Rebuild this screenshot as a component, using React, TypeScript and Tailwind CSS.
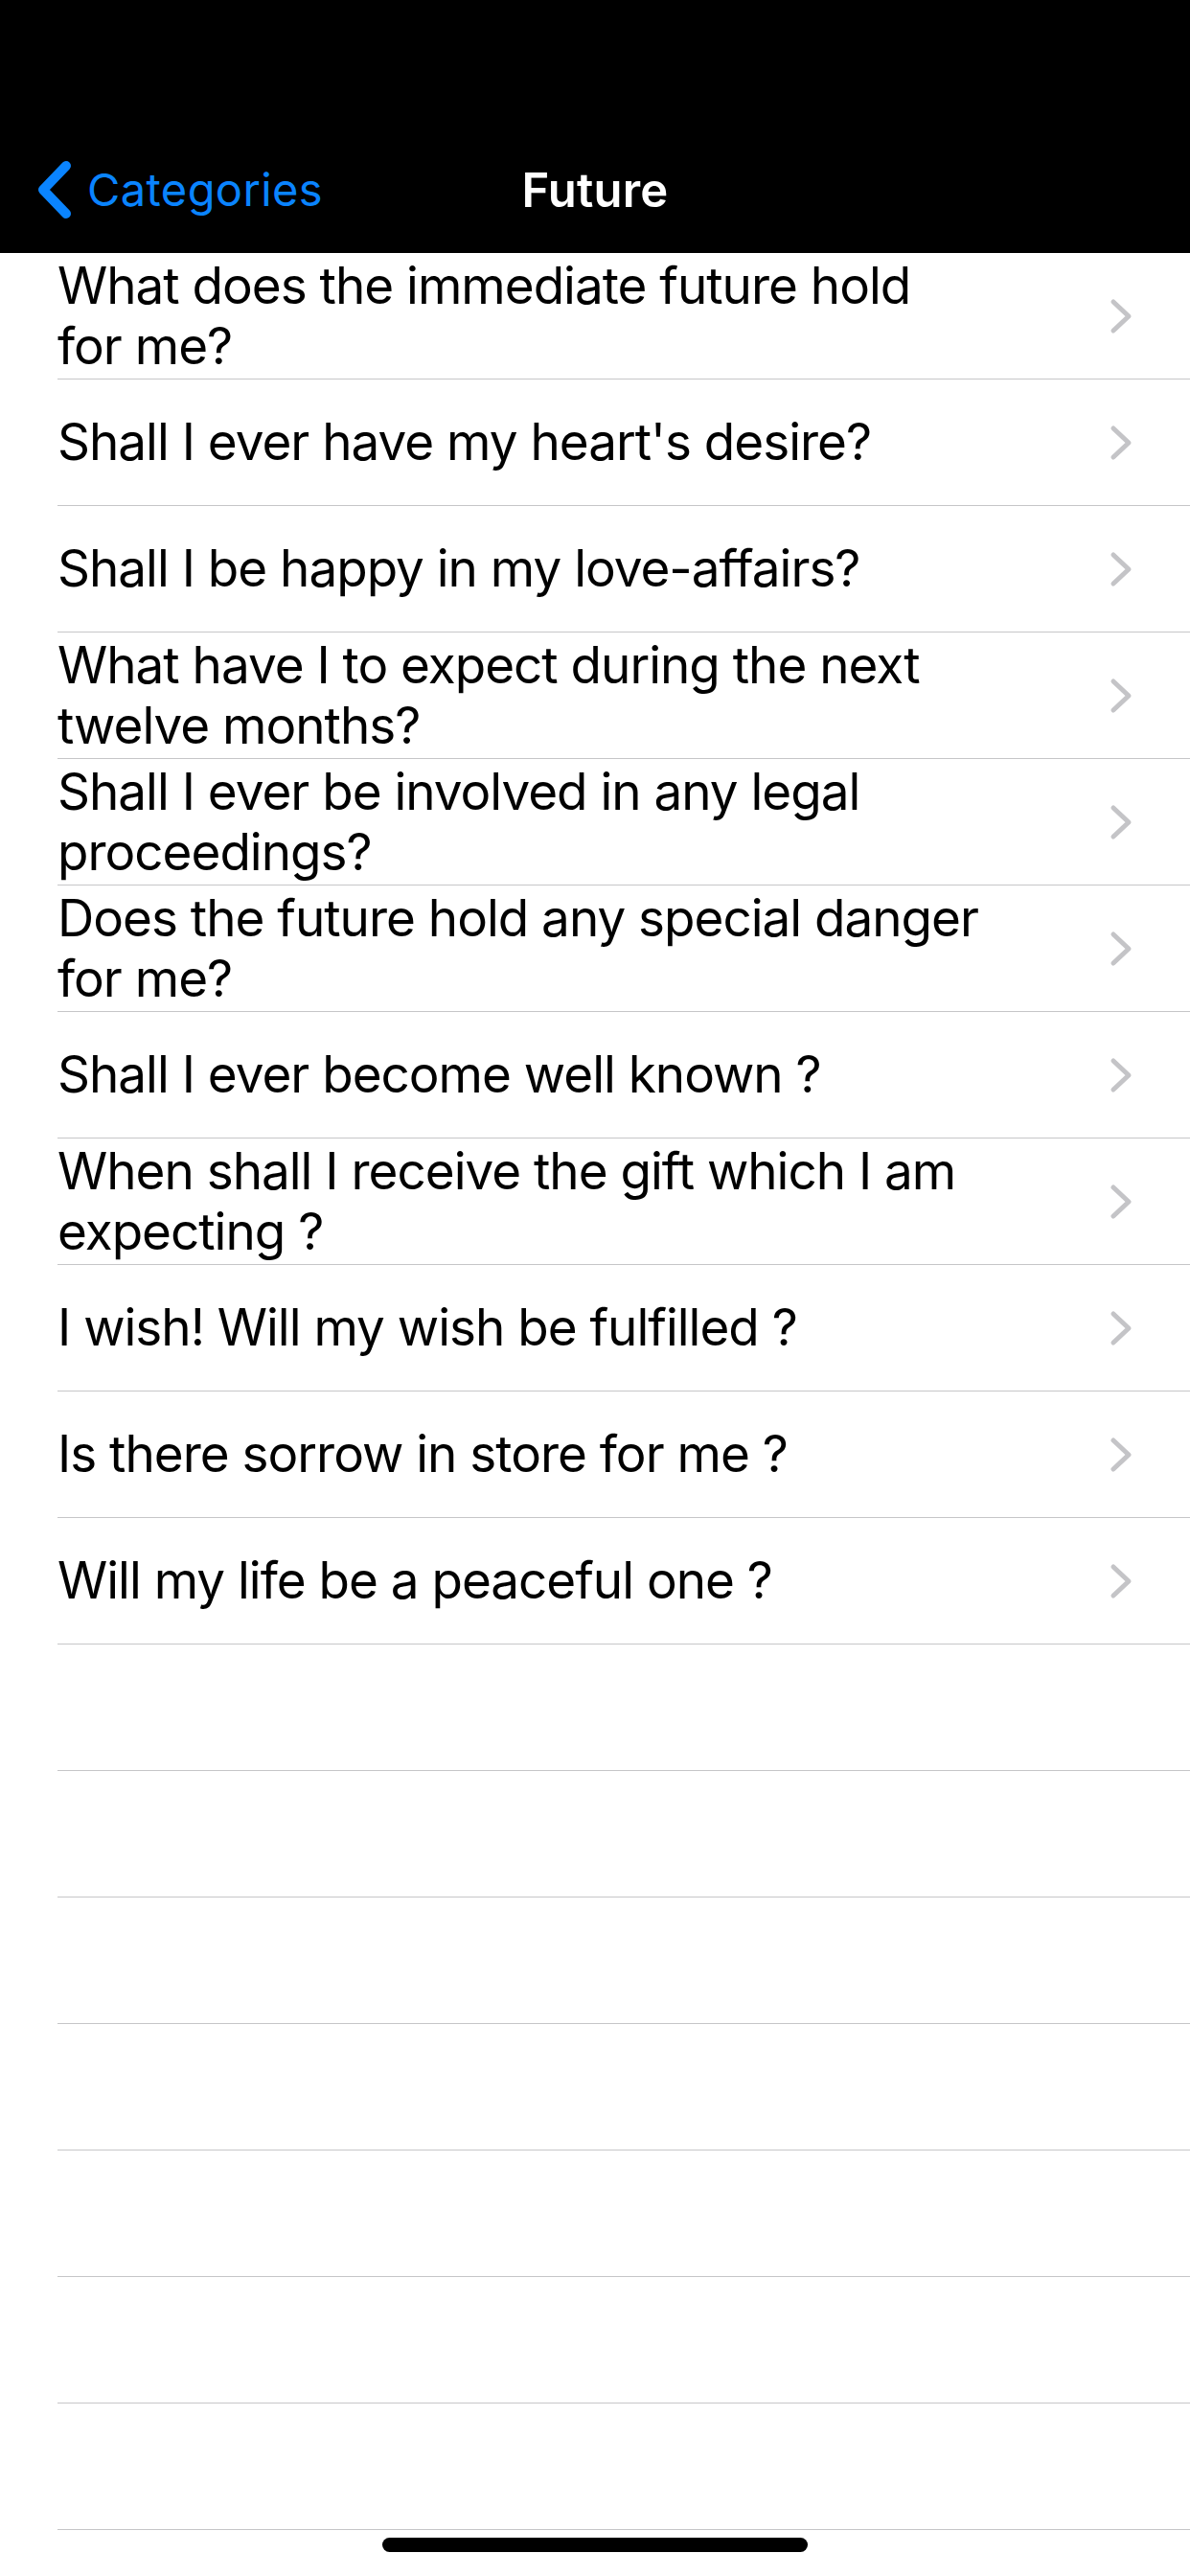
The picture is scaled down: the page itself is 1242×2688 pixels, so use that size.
import React from 'react';

// questions in the "Future" category, split where the original wraps
const questions: string[][] = [
  ['What does the immediate future hold', 'for me?'],
  ["Shall I ever have my heart's desire?"],
  ['Shall I be happy in my love-affairs?'],
  ['What have I to expect during the next', 'twelve months?'],
  ['Shall I ever be involved in any legal', 'proceedings?'],
  ['Does the future hold any special danger', 'for me?'],
  ['Shall I ever become well known ?'],
  ['When shall I receive the gift which I am', 'expecting ?'],
  ['I wish! Will my wish be fulfilled ?'],
  ['Is there sorrow in store for me ?'],
  ['Will my life be a peaceful one ?'],
];

const EMPTY_ROWS = 7;

const BackChevron = () => (
  <svg width="36" height="62" viewBox="0 0 36 62" fill="none">
    <polyline
      points="30,6 6,31 30,56"
      stroke="#0a84ff"
      strokeWidth="10"
      strokeLinecap="round"
      strokeLinejoin="round"
    />
  </svg>
);

const Disclosure = () => (
  <svg width="24" height="38" viewBox="0 0 24 38" fill="none">
    <polyline
      points="4,4 20,19 4,34"
      stroke="#c4c4c7"
      strokeWidth="5"
      strokeLinecap="round"
      strokeLinejoin="round"
    />
  </svg>
);

export default function App() {
  return (
    <div className="relative w-[1242px] h-[2688px] overflow-hidden bg-white font-['Inter','Liberation_Sans',sans-serif]">
      {/* Status bar + nav bar */}
      <header className="bg-black">
        <div className="h-[132px]" />
        <div className="h-[132px] grid grid-cols-[1fr_auto_1fr] items-center">
          <button className="flex items-center gap-[16px] pl-[39px] text-[#0a84ff] text-[47px] tracking-[0.4px] justify-self-start">
            <BackChevron />
            <span className="leading-none pb-[2px]">Categories</span>
          </button>
          <h1 className="text-white text-[49px] font-semibold tracking-[0.2px] leading-none">
            Future
          </h1>
          <div />
        </div>
      </header>

      {/* List */}
      <ul>
        {questions.map((lines, i) => (
          <li
            key={i}
            className="ml-[60px] h-[132px] border-b border-[#c6c6c8] flex items-center justify-between pr-[60px]"
          >
            <div className="text-black text-[53px] leading-[63px] tracking-[-1px]">
              {lines.map((l, j) => (
                <div key={j}>{l}</div>
              ))}
            </div>
            <Disclosure />
          </li>
        ))}
        {Array.from({ length: EMPTY_ROWS }).map((_, i) => (
          <li key={`e${i}`} className="ml-[60px] h-[132px] border-b border-[#c6c6c8]" />
        ))}
      </ul>

      {/* Home indicator */}
      <div className="absolute bottom-[25px] left-1/2 -translate-x-1/2 w-[444px] h-[15px] rounded-full bg-black" />
    </div>
  );
}
